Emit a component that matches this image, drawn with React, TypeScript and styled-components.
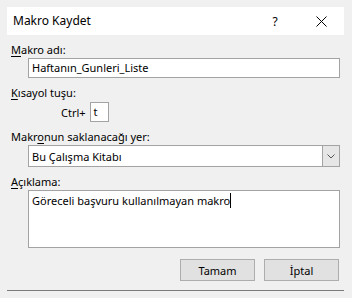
import React from "react";
import styled, { createGlobalStyle } from "styled-components";

const Global = createGlobalStyle`
  html, body { margin: 0; padding: 0; background: #f0f0f0; }
  body { font-family: "Noto Sans", "Liberation Sans", sans-serif; font-size: 11px; color: #000; }
`;

const Frame = styled.div`
  width: 352px;
  height: 298px;
  padding: 7px 8px 0 7px;
  box-sizing: border-box;
  background: #f0f0f0;
`;

const Dialog = styled.div`
  display: flex;
  flex-direction: column;
  height: 284px;
  box-sizing: border-box;
  background: #f0f0f0;
  border-bottom: 1px solid #7a7a7a;
`;

const TitleBar = styled.div`
  display: flex;
  align-items: center;
  height: 28px;
  background: #ffffff;
  padding-left: 6px;
`;

const Title = styled.div`
  flex: 1;
  font-size: 12px;
  line-height: 16px;
`;

const CaptionButton = styled.div`
  width: 46px;
  height: 28px;
  display: flex;
  align-items: center;
  justify-content: center;
  font-size: 12px;
`;

const Body = styled.div`
  display: flex;
  flex-direction: column;
  padding: 7px 4px 0 4px;
  flex: 1;
`;

const Label = styled.div<{ $gap?: number }>`
  line-height: 16px;
  height: 16px;
  margin-top: ${(p) => p.$gap ?? 0}px;
  white-space: nowrap;
`;

const Key = styled.span`
  text-decoration: underline;
  text-underline-offset: 2px;
`;

const Field = styled.div<{ $h: number }>`
  margin-left: 17px;
  height: ${(p) => p.$h}px;
  box-sizing: border-box;
  background: #fff;
  border: 1px solid #a3a3a3;
  padding: 0 3px;
  display: flex;
  align-items: center;
  line-height: 16px;
  white-space: nowrap;
`;

const Area = styled(Field)`
  align-items: flex-start;
  padding-top: 2px;
`;

const Caret = styled.span`
  display: inline-block;
  width: 1px;
  height: 15px;
  background: #000;
  vertical-align: top;
`;

const SelectBox = styled.div`
  margin-left: 17px;
  height: 22px;
  box-sizing: border-box;
  background: #fff;
  border: 1px solid #a3a3a3;
  display: flex;
  align-items: stretch;
`;

const SelectText = styled.div`
  flex: 1;
  padding-left: 3px;
  display: flex;
  align-items: center;
`;

const DropButton = styled.div`
  width: 16px;
  background: #e6e6e6;
  border-left: 1px solid #a3a3a3;
  display: flex;
  align-items: center;
  justify-content: center;
`;

const ShortcutRow = styled.div`
  display: flex;
  align-items: center;
  margin-top: 1px;
  padding-left: 50px;
  gap: 4px;
`;

const KeyBox = styled.div`
  width: 19px;
  height: 20px;
  box-sizing: border-box;
  background: #fff;
  border: 1px solid #a3a3a3;
  padding-left: 3px;
  line-height: 18px;
`;

const Buttons = styled.div`
  display: flex;
  justify-content: flex-end;
  gap: 9px;
  margin-top: 11px;
  padding-right: 1px;
`;

const Button = styled.div`
  width: 75px;
  height: 22px;
  box-sizing: border-box;
  background: #e1e1e1;
  border: 1px solid #adadad;
  display: flex;
  align-items: center;
  justify-content: center;
`;

export default function App() {
  return (
    <>
      <Global />
      <Frame>
        <Dialog>
          <TitleBar>
            <Title>Makro Kaydet</Title>
            <CaptionButton>?</CaptionButton>
            <CaptionButton>
              <svg width="11" height="11" viewBox="0 0 11 11">
                <path d="M0.5 0.5 L10.5 10.5 M10.5 0.5 L0.5 10.5" stroke="#000" strokeWidth="1" fill="none" />
              </svg>
            </CaptionButton>
          </TitleBar>
          <Body>
            <Label>
              <Key>M</Key>akro adı:
            </Label>
            <Field $h={20}>Haftanın_Gunleri_Liste</Field>
            <Label $gap={7}>
              <Key>K</Key>ısayol tuşu:
            </Label>
            <ShortcutRow>
              <span>Ctrl+</span>
              <KeyBox>t</KeyBox>
            </ShortcutRow>
            <Label $gap={7}>
              Makr<Key>o</Key>nun saklanacağı yer:
            </Label>
            <SelectBox>
              <SelectText>Bu Çalışma Kitabı</SelectText>
              <DropButton>
                <svg width="8" height="5" viewBox="0 0 8 5">
                  <path d="M0.5 0.5 L4 4 L7.5 0.5" stroke="#555" strokeWidth="1" fill="none" />
                </svg>
              </DropButton>
            </SelectBox>
            <Label $gap={7}>
              <Key>A</Key>çıklama:
            </Label>
            <Area $h={58}>
              <span>
                Göreceli başvuru kullanılmayan makro<Caret />
              </span>
            </Area>
            <Buttons>
              <Button>Tamam</Button>
              <Button>İptal</Button>
            </Buttons>
          </Body>
        </Dialog>
      </Frame>
    </>
  );
}
